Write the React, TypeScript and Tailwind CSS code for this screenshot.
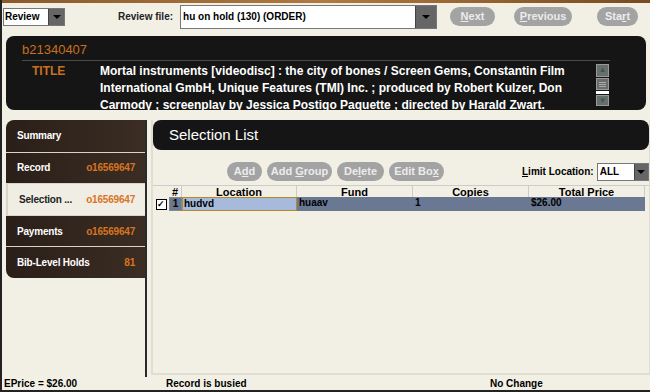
import React from "react";

const font = { fontFamily: '"Liberation Sans", Arial, sans-serif' };

const Pill: React.FC<{ label: string; u: number; className?: string }> = ({ label, u, className }) => (
  <button
    className={`h-[19px] rounded-full bg-[#a3a3a3] text-[#ececec] text-[11px] font-bold flex items-center justify-center shrink-0 ${className ?? ""}`}
  >
    <span className="whitespace-pre">
      {label.slice(0, u)}
      <span className="underline">{label.charAt(u)}</span>
      {label.slice(u + 1)}
    </span>
  </button>
);

const DropBtn: React.FC<{ className?: string }> = ({ className }) => (
  <div className={`bg-[#666] border-l border-[#444] flex items-center justify-center ${className ?? ""}`}>
    <div className="w-0 h-0 border-l-[4px] border-r-[4px] border-t-[4px] border-l-transparent border-r-transparent border-t-black" />
  </div>
);

const navItems = [
  { label: "Summary", value: "" },
  { label: "Record", value: "o16569647" },
  { label: "Selection ...", value: "o16569647", active: true },
  { label: "Payments", value: "o16569647" },
  { label: "Bib-Level Holds", value: "81" },
];

const App: React.FC = () => {
  return (
    <div
      style={font}
      className="w-[650px] h-[392px] bg-[#f2efe5] flex flex-col border-l-2 border-b-2 border-[#222] overflow-hidden text-black"
    >
      <div className="h-[3px] bg-gradient-to-r from-[#8a5a2b] via-[#b07a40] to-[#7a4a20] shrink-0" />

      {/* top bar */}
      <div className="h-[27px] flex items-center shrink-0">
        <div className="ml-[1px] w-[62px] h-[18px] flex border border-[#777] bg-white">
          <span className="flex-1 text-[10px] font-bold pl-[1px] leading-[16px]">Review</span>
          <DropBtn className="w-[16px]" />
        </div>
        <span className="ml-[53px] text-[10px] font-bold text-[#222] whitespace-nowrap">Review file:</span>
        <div className="ml-[7px] w-[257px] h-[24px] flex border border-[#777] bg-white">
          <span className="flex-1 text-[10px] font-bold pl-[2px] leading-[22px]">hu on hold (130) (ORDER)</span>
          <DropBtn className="w-[21px]" />
        </div>
        <Pill label="Next" u={0} className="ml-[13px] w-[45px]" />
        <Pill label="Previous" u={0} className="ml-[19px] w-[58px]" />
        <Pill label="Start" u={3} className="ml-[25px] w-[41px]" />
      </div>

      {/* record header */}
      <div className="mx-[4px] mt-[6px] h-[74px] bg-[#151515] rounded-[8px] shrink-0 flex flex-col px-[16px] pt-[6px] overflow-hidden">
        <div className="text-[#c9711f] text-[13px] leading-[16px]">b21340407</div>
        <div className="border-t border-[#4a4a4a] mt-[2px] w-[588px]" />
        <div className="flex mt-[2px]">
          <div className="w-[78px] pl-[10px] text-[#c9711f] text-[12px] leading-[17px] font-bold shrink-0">TITLE</div>
          <div className="w-[480px] h-[48px] overflow-hidden text-white text-[12px] font-bold leading-[17px]">
            Mortal instruments [videodisc] : the city of bones / Screen Gems, Constantin Film International GmbH, Unique Features (TMI) Inc. ; produced by Robert Kulzer, Don Carmody ; screenplay by Jessica Postigo Paquette ; directed by Harald Zwart.
          </div>
          <div className="ml-[16px] w-[13px] flex flex-col gap-[1px] pt-[1px]">
            <div className="h-[13px] bg-[#6a6e6a] border border-[#999] text-[#2e5e5e] text-[8px] leading-[10px] text-center">▲</div>
            <div className="h-[12px] bg-[#6a6e6a] border border-[#999] flex flex-col justify-center items-center gap-[1px]">
              <div className="w-[7px] h-px bg-[#aaa]" />
              <div className="w-[7px] h-px bg-[#aaa]" />
              <div className="w-[7px] h-px bg-[#aaa]" />
            </div>
            <div className="h-[3px] bg-white" />
            <div className="h-[11px] bg-[#6a6e6a] border border-[#999] text-[#2e5e5e] text-[8px] leading-[9px] text-center">▼</div>
          </div>
        </div>
      </div>

      {/* main */}
      <div className="flex flex-1 mt-[10px] min-h-0">
        <div className="w-[145px] shrink-0 pl-[4px] border-r-2 border-[#2a2a2a]">
          <div className="rounded-l-[8px] overflow-hidden flex flex-col">
            {navItems.map((n, i) => (
              <div
                key={n.label}
                className={`h-[31.6px] flex items-center justify-between pl-[11px] pr-[10px] text-[10px] tracking-[-0.2px] font-bold whitespace-nowrap ${
                  n.active
                    ? "bg-[#f0ede4] text-[#222] border-l-2 border-[#777]"
                    : "bg-gradient-to-r from-[#2a1f19] to-[#3b2d23] text-white"
                } ${i > 0 ? "border-t border-[#d8d4c8]" : ""}`}
              >
                <span>{n.label}</span>
                <span className="text-[#d9741f]">{n.value}</span>
              </div>
            ))}
          </div>
        </div>

        <div className="flex-1 ml-[4px] mr-[4px] mb-[2px] border-l-2 border-b-2 border-r border-[#e0ddd2] flex flex-col">
          <div className="h-[30px] bg-[#151515] rounded-[8px] text-white text-[15px] flex items-center pl-[16px] shrink-0">
            Selection List
          </div>
          <div className="flex items-center mt-[12px] h-[19px] shrink-0">
            <Pill label="Add" u={1} className="ml-[74px] w-[35px]" />
            <Pill label="Add Group" u={4} className="ml-[5px] w-[65px]" />
            <Pill label="Delete" u={2} className="ml-[5px] w-[47px]" />
            <Pill label="Edit Box" u={7} className="ml-[5px] w-[55px]" />
            <span className="ml-[78px] text-[10px] font-bold whitespace-nowrap">
              <span className="underline">L</span>imit Location:
            </span>
            <div className="ml-[3px] w-[52px] h-[18px] flex border border-[#777] bg-white shrink-0">
              <span className="flex-1 text-[10px] font-bold pl-[2px] leading-[16px]">ALL</span>
              <DropBtn className="w-[14px]" />
            </div>
          </div>
          {/* table */}
          <div className="mt-[4px] text-[10px] font-bold">
            <div className="grid grid-cols-[16px_13px_115px_116px_116px_116px] h-[12px] leading-[12px] border-t border-[#ccc] text-[11px]">
              <div />
              <div className="text-center border-r border-[#ccc]">#</div>
              <div className="text-center border-r border-[#ccc]">Location</div>
              <div className="text-center border-r border-[#ccc]">Fund</div>
              <div className="text-center border-r border-[#ccc]">Copies</div>
              <div className="text-center border-r border-[#ccc]">Total Price</div>
            </div>
            <div className="grid grid-cols-[16px_13px_115px_116px_116px_116px] h-[13px] leading-[12px]">
              <div className="flex items-center justify-center">
                <div className="w-[11px] h-[11px] border border-black bg-white text-[9px] leading-[9px] text-center">✓</div>
              </div>
              <div className="bg-[#6a7893] border border-[#888] text-center">1</div>
              <div className="bg-[#a7badb] border border-[#b58a24] pl-[1px]">hudvd</div>
              <div className="bg-[#6a7893] pl-[2px]">huaav</div>
              <div className="bg-[#6a7893] pl-[2px]">1</div>
              <div className="bg-[#6a7893] pl-[2px]">$26.00</div>
            </div>
          </div>
        </div>
      </div>

      {/* status */}
      <div className="h-[13px] flex items-center text-[10px] font-bold shrink-0">
        <span className="ml-[2px] w-[162px]">EPrice = $26.00</span>
        <span className="w-[324px]">Record is busied</span>
        <span>No Change</span>
      </div>
    </div>
  );
};

export default App;
